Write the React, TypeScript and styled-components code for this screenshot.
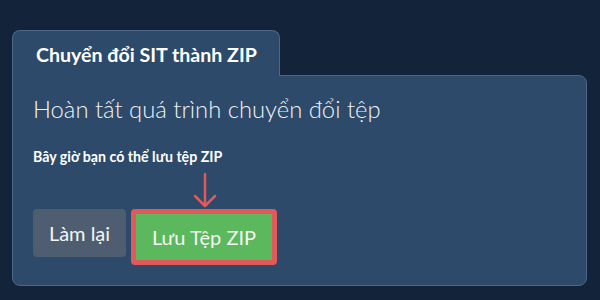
import React from "react";
import styled, { createGlobalStyle } from "styled-components";

const Global = createGlobalStyle`
  html, body { margin: 0; padding: 0; background: #12233a; }
  body { font-family: Lato, "Noto Sans", sans-serif; }
`;

const Page = styled.div`
  width: 600px;
  height: 300px;
  box-sizing: border-box;
  padding: 30px 13px 0 12px;
  background: #12233a;
`;

const Tab = styled.div`
  width: 268px;
  height: 46px;
  box-sizing: border-box;
  background: #2d4a6a;
  border: 1px solid #4d6787;
  border-bottom: none;
  border-radius: 8px 8px 0 0;
  display: flex;
  align-items: center;
  padding-left: 23px;
  padding-top: 2px;
  color: #ffffff;
  font-weight: 700;
  font-size: 19.6px;
  position: relative;
  z-index: 1;
  margin-bottom: -1px;
`;

const Panel = styled.div`
  height: 211px;
  box-sizing: border-box;
  background: #2d4a6a;
  border: 1px solid #4d6787;
  border-radius: 0 8px 8px 8px;
  padding: 18px 20px 0 20px;
  display: flex;
  flex-direction: column;
`;

const Heading = styled.div`
  color: #f0f3f7;
  font-size: 23.8px;
  font-weight: 300;
  line-height: 30px;
`;

const Note = styled.div`
  margin-top: 24px;
  color: #ffffff;
  font-size: 14.2px;
  font-weight: 700;
  line-height: 18px;
`;

const ArrowWrap = styled.div`
  margin-left: 160px;
  width: 24px;
  height: 38px;
  margin-top: 6px;
`;

const Actions = styled.div`
  display: flex;
  align-items: flex-start;
  gap: 5px;
  margin-top: -1px;
`;

const Button = styled.button<{ $variant: "gray" | "green" }>`
  font-family: Lato, "Noto Sans", sans-serif;
  font-size: 20px;
  color: #f4f7f4;
  border-radius: 4px;
  cursor: pointer;
  padding: 0;
  ${(p) =>
    p.$variant === "gray"
      ? `
    background: #4e5d6f;
    border: none;
    width: 93px;
    height: 48px;
  `
      : `
    background: #5cb85c;
    border: 5px solid #e05a5c;
    width: 146px;
    height: 56px;
  `}
`;

export default function App() {
  return (
    <>
      <Global />
      <Page>
        <Tab>Chuyển đổi SIT thành ZIP</Tab>
        <Panel>
          <Heading>Hoàn tất quá trình chuyển đổi tệp</Heading>
          <Note>Bây giờ bạn có thể lưu tệp ZIP</Note>
          <ArrowWrap>
            <svg width="24" height="38" viewBox="0 0 24 38">
              <path
                d="M12 2 V34 M2 24 L12 34 L22 24"
                stroke="#e05a5c"
                strokeWidth="2.5"
                fill="none"
                strokeLinecap="round"
                strokeLinejoin="round"
              />
            </svg>
          </ArrowWrap>
          <Actions>
            <Button $variant="gray">Làm lại</Button>
            <Button $variant="green">Lưu Tệp ZIP</Button>
          </Actions>
        </Panel>
      </Page>
    </>
  );
}
